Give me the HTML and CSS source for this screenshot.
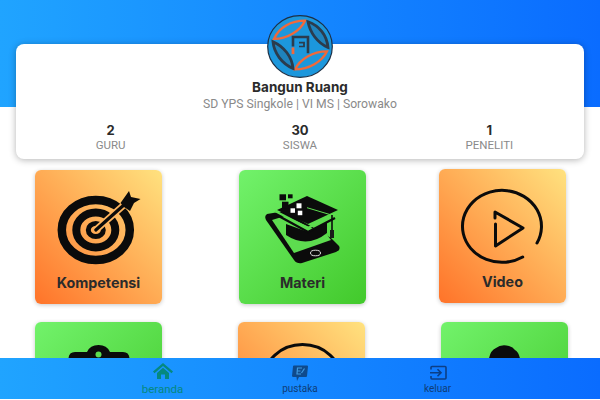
FILE: index.html
```html
<!DOCTYPE html>
<html lang="en">
<head>
  <meta charset="UTF-8" />
  <title>Bangun Ruang</title>
  <link rel="stylesheet" href="styles.css">
</head>
<body>
  <div class="hero">
    <svg class="logo" viewBox="0 0 66 66" preserveAspectRatio="none">
      <circle cx="33" cy="33" r="32.3" fill="#1c97dc" stroke="#1d2f45" stroke-width="1.2"/>
      <g fill="none" stroke="#f0693a" stroke-width="2.4">
        <path d="M7 25 C12 13 24 6 38 6 C33 17 20 25 7 25 Z"/>
        <path d="M28 57 C33 46 46 38 60 38 C55 49 42 57 28 57 Z"/>
      </g>
      <g fill="#1f83bd" stroke="#2b3c4d" stroke-width="2.8">
        <path d="M41 7 C52 11 60 21 61 34 C50 29 43 18 41 7 Z"/>
        <path d="M6 28 C17 33 25 44 26 56 C15 51 7 40 6 28 Z"/>
      </g>
      <path d="M26 33 V23 H41 V40" fill="none" stroke="#2b3c4d" stroke-width="2.6"/>
      <path d="M32 29 H37 V33 H32" fill="none" stroke="#2b3c4d" stroke-width="1.8"/>
      <path d="M26 34 V41" fill="none" stroke="#f0693a" stroke-width="2.8"/>
    </svg>
    <div class="profile">
      <h1 class="profile-name">Bangun Ruang</h1>
      <p class="profile-school">SD YPS Singkole | VI MS | Sorowako</p>
      <div class="stats">
        <div class="stat"><b>2</b><span>GURU</span></div>
        <div class="stat"><b>30</b><span>SISWA</span></div>
        <div class="stat"><b>1</b><span>PENELITI</span></div>
      </div>
    </div>
  </div>

  <div class="menu">
    <div class="menu-row">
      <a class="tile orange">
        <svg class="tile-icon" viewBox="0 0 84 84">
          <g fill="none" stroke="#0b0b0b">
            <ellipse cx="38.8" cy="39" rx="34" ry="30" stroke-width="8.5"/>
            <ellipse cx="38.8" cy="39" rx="19.5" ry="17.5" stroke-width="8"/>
            <ellipse cx="38.8" cy="39" rx="7.5" ry="6.5" stroke-width="5"/>
          </g>
          <path d="M38.8 39 L68 13" fill="none" stroke="#ffb55f" stroke-width="7"/>
          <path d="M38.8 39 L68 13" fill="none" stroke="#0b0b0b" stroke-width="3.2" stroke-linecap="round"/>
          <path d="M63.5 12 L72 0 L74 6 L83.5 8 L77 12 L73 20 L67 16 Z" fill="#0b0b0b"/>
        </svg>
        <span class="tile-label">Kompetensi</span>
      </a>
      <a class="tile green tile-materi">
        <svg class="tile-icon" viewBox="0 0 84 84">
          <path d="M6 23 L24 20 L70 47 L78 55 Q80 59 75 61 L41 72 Q36 73 33 69 L5 29 Q3 25 6 23 Z" fill="#0b0b0b"/>
          <path d="M11 29 L33 62 L70 49 L66 44 L24 25 Z" fill="#5ddc4f"/>
          <path d="M25 33 V44 Q46 58 66 42 V31 L47 41 Z" fill="#0b0b0b"/>
          <path d="M14 23 L47 41 L74 27" fill="none" stroke="#0b0b0b" stroke-width="2.4"/>
          <path d="M14 20 L47 37 L75 22.5" fill="none" stroke="#5ddc4f" stroke-width="2"/>
          <path d="M16 19 L46 5 L77 19 L47 33 Z" fill="#0b0b0b"/>
          <path d="M46 16.7 L70.5 24" stroke="#5ddc4f" stroke-width="1"/>
          <path d="M71 24 V40" stroke="#0b0b0b" stroke-width="1.6"/>
          <rect x="69" y="39" width="4" height="8" fill="#1a1a1a"/>
          <rect x="18.5" y="3.3" width="6.5" height="6" fill="#0b0b0b"/>
          <rect x="27" y="3.3" width="4.6" height="4" fill="#0b0b0b"/>
          <rect x="21" y="10.7" width="6.5" height="6.5" fill="#0b0b0b"/>
          <rect x="29.5" y="17.3" width="4.5" height="4.5" fill="#fff"/>
          <rect x="35.5" y="12.3" width="5" height="5" fill="#fff"/>
          <rect x="36.8" y="19.7" width="4.5" height="4.5" fill="#fff"/>
          <ellipse cx="54.5" cy="62" rx="5" ry="2.8" fill="none" stroke="#ddd" stroke-width="1"/>
        </svg>
        <span class="tile-label">Materi</span>
      </a>
      <a class="tile orange tile-video">
        <svg class="tile-icon" viewBox="0 0 84 84">
          <g fill="none" stroke="#0b0b0b" stroke-width="3" stroke-linecap="round" stroke-linejoin="round">
            <path d="M76 53 A39.5 36 0 1 0 61.7 67"/>
            <path d="M34 28 V22 L62 38 L34.5 56 V34"/>
          </g>
        </svg>
        <span class="tile-label">Video</span>
      </a>
    </div>
    <div class="menu-row">
      <a class="tile green">
        <svg class="tile-icon" viewBox="0 0 84 84">
          <path d="M11.5 16 Q11.5 9 18 9 H30 Q33 2 41.5 2 Q50 2 53 9 H66 Q72.5 9 72.5 16 V70 H11.5 Z" fill="#0b0b0b"/>
          <circle cx="41.5" cy="11.5" r="3" fill="#5ddc4f"/>
        </svg>
      </a>
      <a class="tile orange">
        <svg class="tile-icon" viewBox="0 0 84 84">
          <ellipse cx="42.5" cy="37.5" rx="39" ry="36" fill="none" stroke="#0b0b0b" stroke-width="3"/>
        </svg>
      </a>
      <a class="tile green">
        <svg class="tile-icon" viewBox="0 0 84 84">
          <path d="M25.5 20 Q26 8 33 5 Q38 1 46 3 Q50 4 52 7 Q57 10 57.5 20 V60 H25.5 Z" fill="#0b0b0b"/>
        </svg>
      </a>
    </div>
  </div>

  <nav class="bottom-nav">
    <a class="nav-item active">
      <svg viewBox="0 0 20 18"><path d="M10 0 L20 8.5 L18.5 10.2 L10 3 L1.5 10.2 L0 8.5 Z M4 10 L10 4.8 L16 10 V16 H12 V11.5 H8 V16 H4 Z" fill="#05897f"/></svg>
      <span>beranda</span>
    </a>
    <a class="nav-item">
      <svg viewBox="0 0 20 18"><path d="M4 2.5 H17 Q18 2.5 18 3.5 L17 13 Q17 14 16 14 H9 L7 18 L6.5 14 H3.5 Q2 14 2 13 L3 3.5 Q3 2.5 4 2.5 Z" fill="#0f4a8c"/><path d="M12 5 H7.5 L7 11 H11 M7.5 8 H10.5" fill="none" stroke="#3f9ae0" stroke-width="1.2"/><path d="M14.5 5.5 L11.5 10" stroke="#3f9ae0" stroke-width="1.2"/></svg>
      <span>pustaka</span>
    </a>
    <a class="nav-item">
      <svg viewBox="0 0 20 18"><path d="M3 6.5 V4.5 Q3 3.5 4 3.5 H17 Q18 3.5 18 4.5 V15 Q18 16 17 16 H4 Q3 16 3 15 V13" fill="none" stroke="#0c3f86" stroke-width="1.6"/><path d="M2 9.8 H13 M9.5 6.3 L13 9.8 L9.5 13.3" fill="none" stroke="#0c3f86" stroke-width="1.6"/></svg>
      <span>keluar</span>
    </a>
  </nav>
</body>
</html>
```

FILE: styles.css
```css
* {
  box-sizing: border-box;
}

html, body {
  height: 100%;
}

body {
  margin: 0;
  height: 400px;
  display: flex;
  flex-direction: column;
  font-family: Inter, "Liberation Sans", sans-serif;
  background: #fff;
  overflow: hidden;
}

.hero {
  flex: none;
  height: 160px;
  padding: 15px 16px 0;
  background: linear-gradient(90deg, #20a4ff, #0a6cff) top / 100% 107px no-repeat;
}

.logo {
  display: block;
  position: relative;
  z-index: 1;
  width: 66px;
  height: 63px;
  margin: 0 auto -34px;
}

.profile {
  height: 115px;
  padding-top: 34px;
  background: #fff;
  border-radius: 8px;
  box-shadow: 0 1px 7px rgba(0, 0, 0, 0.3);
  text-align: center;
}

.profile-name {
  margin: 0;
  font-size: 13.5px;
  line-height: 18px;
  font-weight: 700;
  color: #2b2b2b;
}

.profile-school {
  margin: 0;
  font-family: Roboto, "Liberation Sans", sans-serif;
  font-size: 12.2px;
  line-height: 16px;
  color: #8a8a8a;
}

.stats {
  display: grid;
  grid-template-columns: repeat(3, 1fr);
  margin-top: 11px;
}

.stat b {
  display: block;
  font-size: 13px;
  line-height: 15px;
  color: #2b2b2b;
}

.stat span {
  display: block;
  font-family: Roboto, "Liberation Sans", sans-serif;
  font-size: 11.5px;
  line-height: 15px;
  color: #8a8a8a;
}

.menu {
  flex: 1;
  min-height: 0;
  overflow: hidden;
  display: flex;
  flex-direction: column;
  gap: 18px;
  padding: 10px 0 0 35px;
}

.menu-row {
  display: flex;
  flex: none;
  gap: 76px;
}

.tile {
  flex: none;
  display: flex;
  flex-direction: column;
  align-items: center;
  width: 127px;
  height: 134px;
  padding-top: 21px;
  border-radius: 6px;
  box-shadow: 0 1px 4px rgba(0, 0, 0, 0.22);
}

.tile-materi {
  margin-left: 1px;
}

.tile-video {
  margin: -1px 0 0 -3px;
}

.orange {
  background: linear-gradient(to top right, #ff7329, #ffe27f);
}

.green {
  background: linear-gradient(135deg, #72f26b, #42c92b);
}

.tile-icon {
  flex: none;
  width: 84px;
  height: 84px;
  overflow: visible;
}

.tile-label {
  margin-top: -1px;
  font-size: 14.3px;
  line-height: 18px;
  font-weight: 700;
  color: #2b2b2b;
}

.bottom-nav {
  flex: none;
  height: 41px;
  margin-bottom: 1px;
  padding-left: 93.75px;
  display: flex;
  background: linear-gradient(90deg, #20a4ff, #0a6cff);
}

.nav-item {
  width: 137.5px;
  padding-top: 5px;
  display: flex;
  flex-direction: column;
  align-items: center;
  font-family: Roboto, "Liberation Sans", sans-serif;
  font-size: 10px;
  line-height: 12px;
  color: #0f3d78;
}

.nav-item svg {
  flex: none;
  width: 20px;
  height: 18px;
  margin-bottom: 2px;
}

.nav-item.active {
  color: #05897f;
  font-size: 11.5px;
}
```
